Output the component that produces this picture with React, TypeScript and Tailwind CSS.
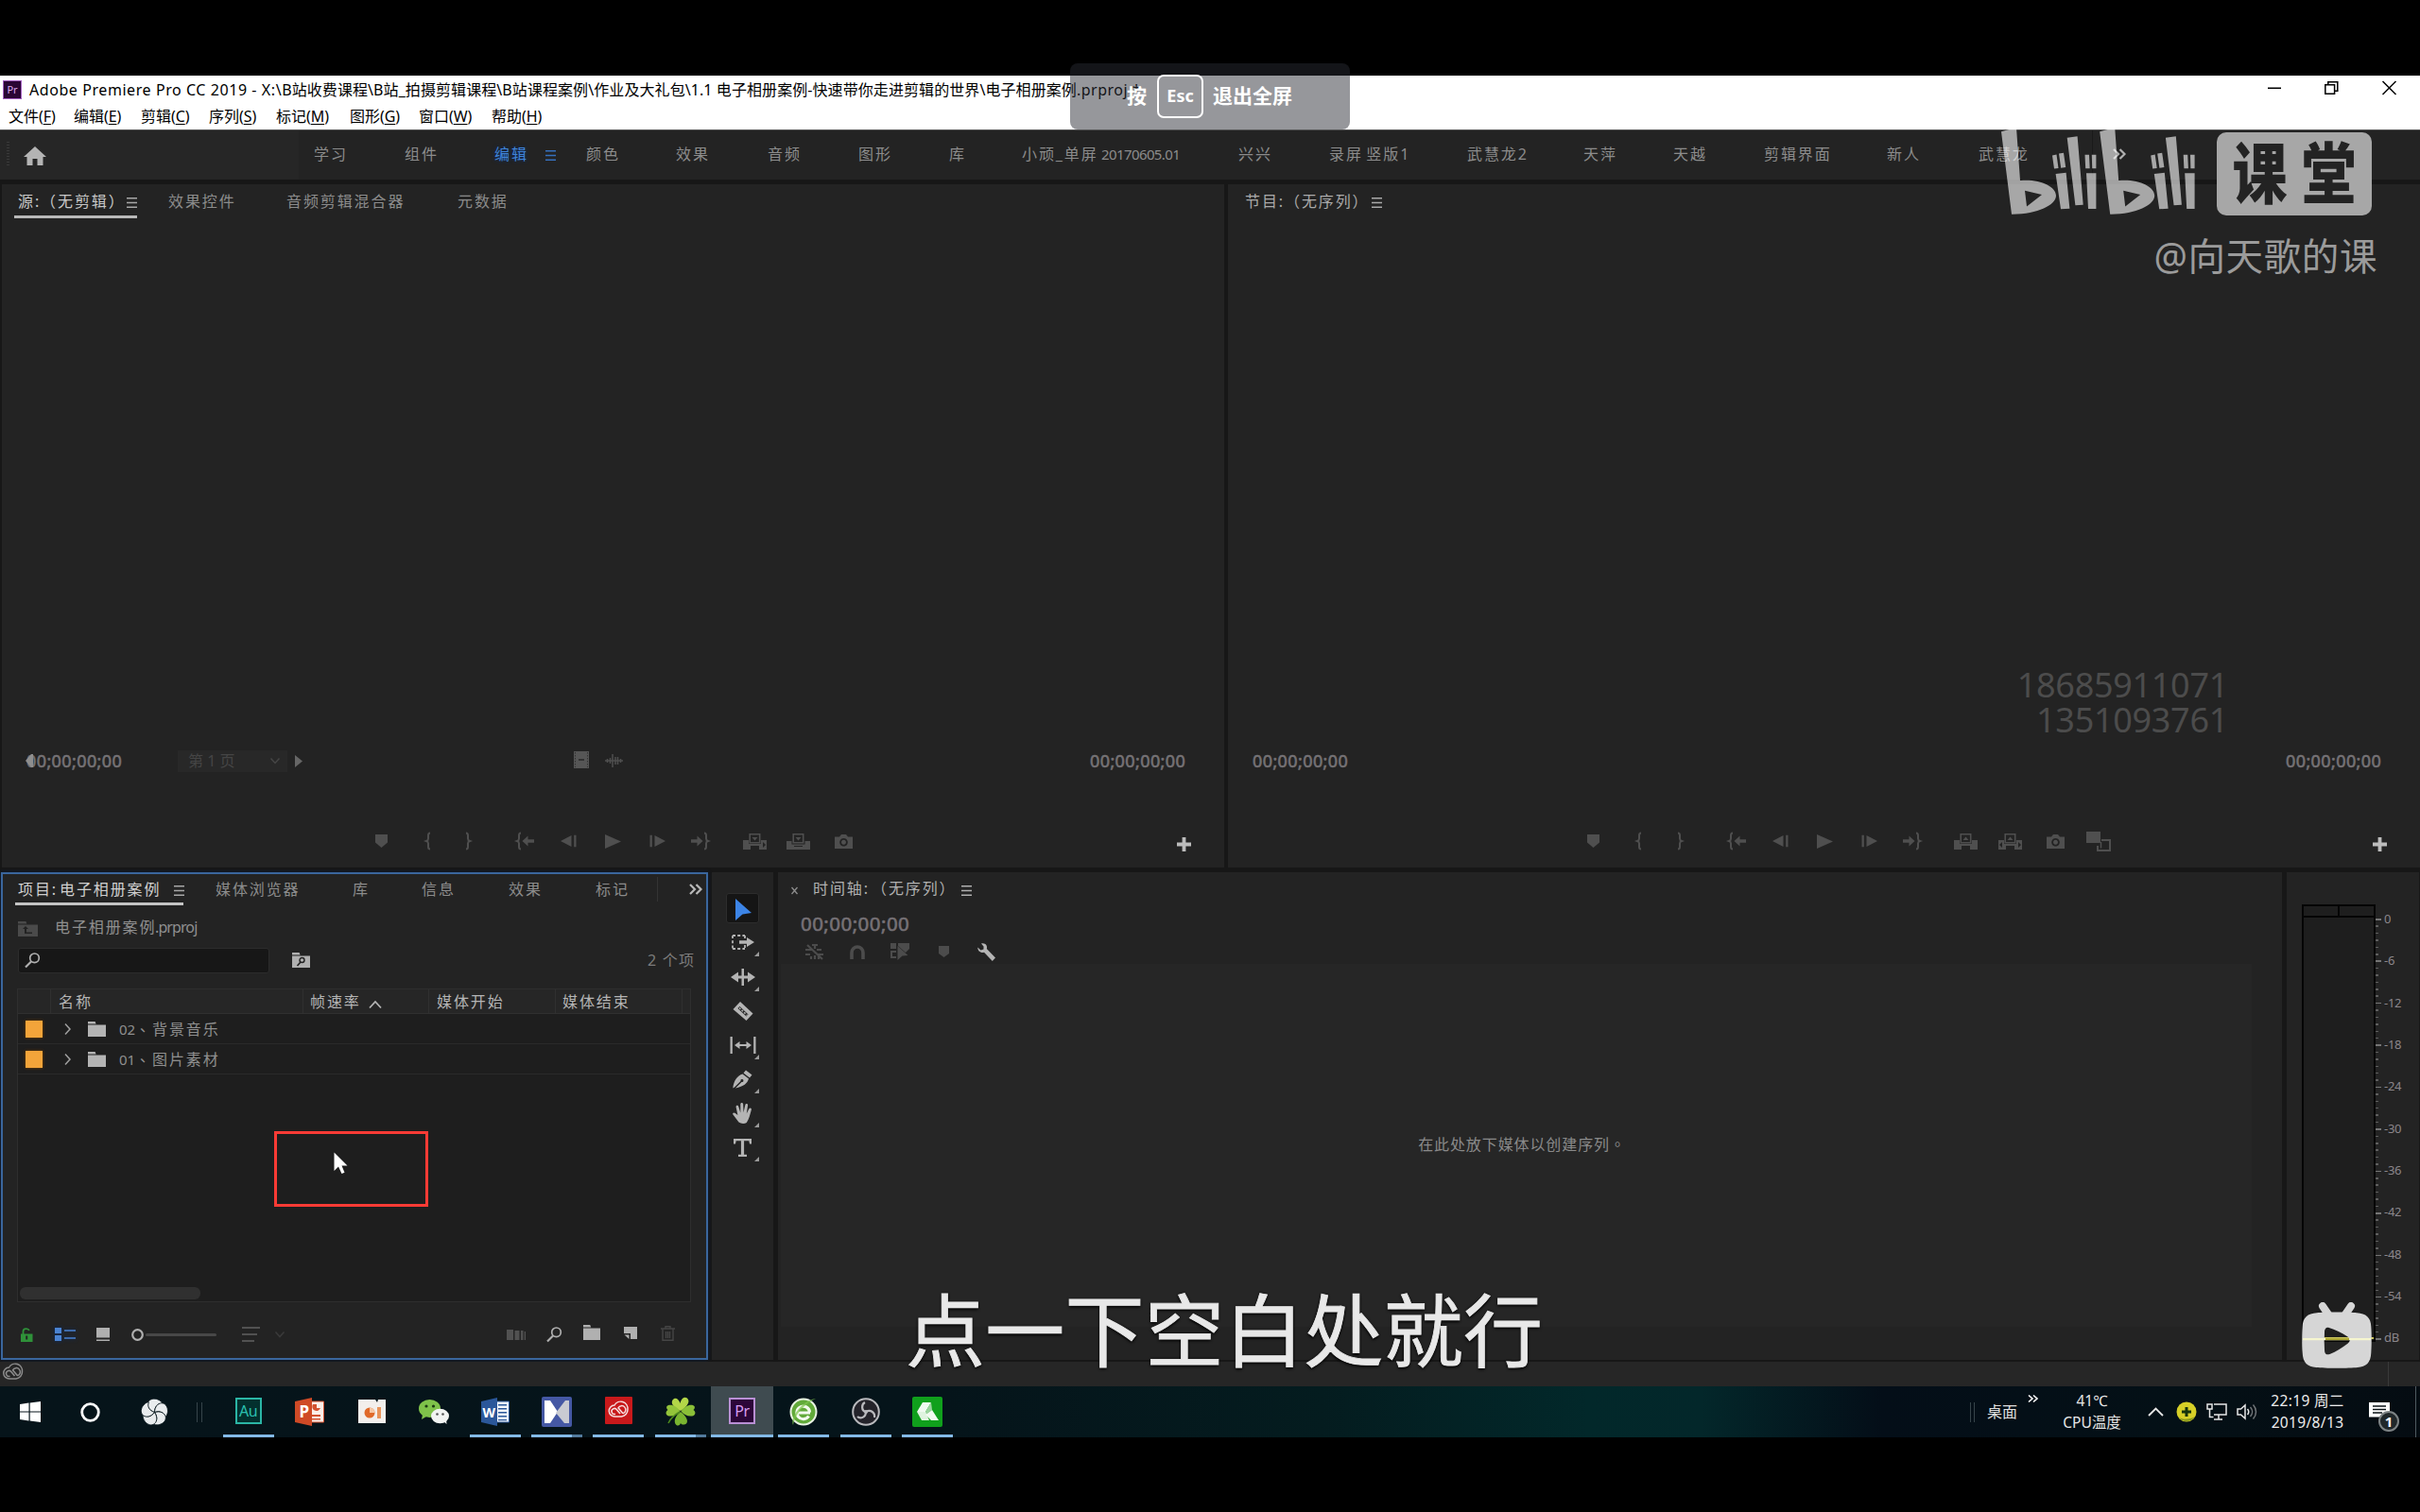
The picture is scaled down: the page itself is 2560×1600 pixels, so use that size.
import React from "react";

const ui = "font-['Noto_Sans','Noto_Sans_CJK_SC',sans-serif]";

type Item = { at: number; node: React.ReactNode };

/* A horizontal bar whose cells run from one start offset to the next. */
function Strip({ items, className = "" }: { items: Item[]; className?: string }) {
  return (
    <div className={`flex items-center whitespace-nowrap ${className}`}>
      <div className="shrink-0" style={{ width: items[0].at }} />
      {items.map((it, i) => (
        <div
          key={i}
          className="flex shrink-0 items-center"
          style={{ width: i < items.length - 1 ? items[i + 1].at - it.at : undefined }}
        >
          {it.node}
        </div>
      ))}
    </div>
  );
}

function Svg({ w, h, children, className = "" }: { w: number; h: number; children: React.ReactNode; className?: string }) {
  return (
    <svg width={w} height={h} viewBox={`0 0 ${w} ${h}`} fill="currentColor" className={`block shrink-0 overflow-visible ${className}`}>
      {children}
    </svg>
  );
}

const Zh = ({ children, className = "" }: { children: React.ReactNode; className?: string }) => (
  <span className={`text-[16px] leading-[20px] tracking-[1.9px] ${className}`}>{children}</span>
);

const MenuLines = ({ className = "" }: { className?: string }) => (
  <Svg w={11} h={11} className={className}>
    <path d="M0 0h11v1.5H0zM0 4.7h11v1.5H0zM0 9.4h11v1.5H0z" />
  </Svg>
);

const Chevrons = ({ className = "" }: { className?: string }) => (
  <Svg w={14} h={12} className={className}>
    <path d="M1 1l5 5-5 5M7.500 1l5 5-5 5" fill="none" stroke="currentColor" strokeWidth="2.2" />
  </Svg>
);

const Timecode = ({ className = "" }: { className?: string }) => (
  <span className={`text-[18px] leading-[20px] tracking-[0.4px] text-[#757275] [-webkit-text-stroke:0.6px_currentColor] ${className}`}>00;00;00;00</span>
);

/* ---------- transport icons ---------- */
const Marker = () => <Svg w={13} h={14}><path d="M0 0h13v8.500L6.500 14 0 8.500z" /></Svg>;
const brace = "M5 .5C3 .5 3 1.500 3 3v3.500C3 8 2.500 8.500 1 9c1.500.5 2 1 2 2.500V15c0 1.500 0 2.500 2 2.500";
const BraceL = () => <Svg w={6} h={18}><path d={brace} fill="none" stroke="currentColor" strokeWidth="2" /></Svg>;
const BraceR = () => <Svg w={6} h={18} className="-scale-x-100"><path d={brace} fill="none" stroke="currentColor" strokeWidth="2" /></Svg>;
const GoIn = ({ flip = false }: { flip?: boolean }) => (
  <Svg w={19} h={18} className={flip ? "-scale-x-100" : ""}>
    <path d={brace} fill="none" stroke="currentColor" strokeWidth="2" />
    <path d="M6.500 9l6-5.500v3.700H19v3.600h-6.500v3.700z" />
  </Svg>
);
const StepBack = ({ flip = false }: { flip?: boolean }) => (
  <Svg w={17} h={12} className={flip ? "-scale-x-100" : ""}>
    <path d="M0 6L11.500 0v12zM14.200 -.3h2.300v12.600h-2.300z" />
  </Svg>
);
const Play = () => <Svg w={17} h={15}><path d="M0 0l17 7.500L0 15z" /></Svg>;
const Insert = ({ kind }: { kind: "insert" | "over" | "lift" | "extract" }) => (
  <Svg w={25} h={17}>
    {kind === "over" ? (
      <path d="M0 8h5.500v3.500h14V8H25v9H0z" />
    ) : (
      <path d="M0 7h6v4h13V7h6v10h-8v-4H8v4H0z" />
    )}
    <path d="M7.200 .8h10.500v9H7.200z" fill="none" stroke="currentColor" strokeWidth="1.6" />
    <path d={kind === "lift" || kind === "extract" ? "M9.500 7l3-3.500L15.500 7z" : "M9.500 4l3 3.500L15.500 4z"} />
    {kind !== "over" && kind !== "lift" && <path d="M21 9l3 3-3 3z" fill="#232323" />}
    {kind === "extract" && <path d="M4 9l-3 3 3 3z" fill="#232323" />}
    {kind === "over" && <path d="M8 13h9v1H8z" fill="#232323" />}
  </Svg>
);
const Camera = () => (
  <Svg w={19} h={15}>
    <path fillRule="evenodd" d="M0 2.500h5L7 0h5l2 2.500h5V15H0zM9.500 4a4.300 4.300 0 1 0 .01 0zM9.500 5.800a2.500 2.500 0 1 1-.01 0z" />
  </Svg>
);
const Compare = () => (
  <Svg w={26} h={21}>
    <path d="M0 0h15v12H0z" />
    <path d="M16 9h9v11H12v-5" fill="none" stroke="currentColor" strokeWidth="2" />
    <path d="M15.500 11v6.500" fill="none" stroke="currentColor" strokeWidth="1.500" />
  </Svg>
);
const Plus = () => <Svg w={15} h={15} className="text-[#bcbcbc]"><path d="M5.600 0h3.800v5.600H15v3.800H9.400V15H5.600V9.400H0V5.600h5.600z" /></Svg>;

/* ---------- shared small icons ---------- */
const Folder = ({ w = 19 }: { w?: number }) => <Svg w={w} h={16}><path d={`M0 0h${w * 0.4}l1 2.500H0zM0 3.500h${w}V16H0z`} /></Svg>;
const Magnify = () => (
  <Svg w={17} h={16}>
    <circle cx="10.500" cy="5.800" r="4.800" fill="none" stroke="currentColor" strokeWidth="1.700" />
    <path d="M7 9.500L1 15.500" stroke="currentColor" strokeWidth="2.200" />
  </Svg>
);

function TitleBar() {
  const menus: [number, string, string][] = [
    [9, "文件", "F"], [78, "编辑", "E"], [149, "剪辑", "C"], [221, "序列", "S"],
    [292, "标记", "M"], [370, "图形", "G"], [443, "窗口", "W"], [520, "帮助", "H"],
  ];
  return (
    <header className={`flex h-[58px] shrink-0 flex-col border-b border-[#555] bg-white text-black ${ui}`}>
      <div className="flex h-[31px] items-center">
        <div className="mt-[-2px] ml-[3px] flex h-[20px] w-[20px] items-center justify-center border border-[#a35fc0] bg-[#2a0634] text-[11px] leading-none text-[#d9a6ee]">Pr</div>
        <div className="-mt-[2px] ml-[8px] flex w-[2368px] text-[16px] leading-[20px] whitespace-pre">
          <span className="tracking-[0.57px]">Adobe Premiere Pro CC 2019 - X:\</span>
          <span className="tracking-[0.08px]">B站收费课程\B站_拍摄剪辑课程\B站课程案例\作业及大礼包\1.1 电子相册案例-快速带你走进剪辑的世界\电子相册案例</span>
          <span className="tracking-[0.500px]">.prproj *</span>
        </div>
        <Strip
          className="-mt-[6px]"
          items={[
            { at: 0, node: <Svg w={14} h={14}><path d="M0 6.500h14v1.600H0z" /></Svg> },
            { at: 60, node: <Svg w={15} h={14}><path d="M.8 3.800h9.800v9.500H.8zM3.800 3.500V.8h10v9.500h-3" fill="none" stroke="#000" strokeWidth="1.500" /></Svg> },
            { at: 121, node: <Svg w={15} h={14}><path d="M.5 0l14 14M14.500 0l-14 14" stroke="#000" strokeWidth="1.500" /></Svg> },
          ]}
        />
      </div>
      <Strip
        className="-mt-[1px] h-[26px] text-[16px] leading-[20px]"
        items={menus.map(([at, t, k]) => ({
          at,
          node: <span className="tracking-[-0.05px]">{t}(<span className="underline underline-offset-2">{k}</span>)</span>,
        }))}
      />
    </header>
  );
}

function WorkspaceBar() {
  const tabs: Item[] = [
    { at: 7, node: <div className="h-[26px] w-[3px] bg-[repeating-linear-gradient(#3a3a3a_0_1px,transparent_1px_3px)]" /> },
    { at: 25, node: <Svg w={24} h={20} className="mt-[4px] text-[#b4b4b4]"><path d="M12 0l12 11h-3.500v9h-6v-7h-5v7h-6v-9H0z" /></Svg> },
    { at: 332, node: <Zh>学习</Zh> },
    { at: 428, node: <Zh>组件</Zh> },
    { at: 523, node: <Zh className="text-[#3f83d8] [text-shadow:0_0_4px_#0a2c66]">编辑</Zh> },
    { at: 577, node: <MenuLines className="mt-[2px] text-[#3670bd]" /> },
    { at: 620, node: <Zh>颜色</Zh> },
    { at: 715, node: <Zh>效果</Zh> },
    { at: 812, node: <Zh>音频</Zh> },
    { at: 908, node: <Zh>图形</Zh> },
    { at: 1004, node: <Zh>库</Zh> },
    { at: 1081, node: <Zh>小顽_单屏</Zh> },
    { at: 1165, node: <span className="text-[15px] tracking-[-0.6px]">20170605.01</span> },
    { at: 1310, node: <Zh>兴兴</Zh> },
    { at: 1406, node: <Zh className="[word-spacing:-2.500px]">录屏 竖版1</Zh> },
    { at: 1552, node: <Zh>武慧龙2</Zh> },
    { at: 1675, node: <Zh>天萍</Zh> },
    { at: 1770, node: <Zh>天越</Zh> },
    { at: 1866, node: <Zh>剪辑界面</Zh> },
    { at: 1996, node: <Zh>新人</Zh> },
    { at: 2093, node: <Zh>武慧龙</Zh> },
    { at: 2213, node: <div className="h-[50px] w-px bg-[#191919]" /> },
    { at: 2235, node: <Chevrons className="text-[#b0b0b0]" /> },
  ];
  return <Strip className="h-[52px] shrink-0 bg-[linear-gradient(90deg,#262626_316px,#232323_316px)] pb-[2px] text-[#8c8c8c]" items={tabs} />;
}

function Transport({ items }: { items: Item[] }) {
  return <Strip className="h-[24px] text-[#4f4f4f]" items={items} />;
}

function SourcePanel() {
  return (
    <section className="ml-[2px] flex h-[723px] w-[1293px] flex-col bg-[#232323]">
      <div className="flex h-[36px] flex-col">
        <Strip
          className="mt-[7px] h-[22px] text-[#8c8c8c]"
          items={[
            { at: 17, node: <Zh className="text-[#c8c8c8]">源:（无剪辑）</Zh> },
            { at: 132, node: <MenuLines className="mt-[3px] text-[#a8a8a8]" /> },
            { at: 176, node: <Zh>效果控件</Zh> },
            { at: 301, node: <Zh>音频剪辑混合器</Zh> },
            { at: 482, node: <Zh>元数据</Zh> },
          ]}
        />
        <div className="mt-[4px] ml-[13px] h-[3px] w-[130px] shrink-0 bg-[#b8b8b8]" />
      </div>
      <div className="flex-1" />
      <Strip
        className="h-[24px] text-[#4f4f4f]"
        items={[
          { at: 26, node: <><Timecode className="text-[#7d7b7d]" /><Svg w={9} h={14} className="-ml-[102px]"><path d="M6 0h2v14H6L0 7z" className="text-[#8e8e8e]" fill="currentColor" /></Svg></> },
          {
            at: 186,
            node: (
              <div className="flex h-[23px] w-[116px] items-center justify-between bg-[#282828] pr-[8px] pl-[11px] text-[#454545]">
                <span className="text-[16px] leading-[20px]">第 1 页</span>
                <Svg w={10} h={6}><path d="M.5.5L5 5.500 9.500.5" fill="none" stroke="currentColor" strokeWidth="1.500" /></Svg>
              </div>
            ),
          },
          { at: 310, node: <Svg w={8} h={13} className="text-[#666]"><path d="M0 0l8 6.500L0 13z" /></Svg> },
          { at: 605, node: <Svg w={16} h={18} className="-mt-[3px] text-[#565656]"><path d="M0 0h16v18H0z" /><path d="M5 8.300h6v1.400H5z" fill="#232323" /><path d="M1.500 1v16M14.500 1v16" stroke="#333" strokeWidth="1" strokeDasharray="1.5 1.5" /></Svg> },
          { at: 638, node: <Svg w={19} h={14} className="-mt-[1px]"><path d="M0 7h19M2.500 5v4M5.500 4v6M8 0v14M11 3v8M13.500 3v8M16.500 5v4" fill="none" stroke="currentColor" strokeWidth="1.500" /></Svg> },
          { at: 1151, node: <Timecode /> },
        ]}
      />
      <div className="h-[61px]" />
      <Transport
        items={[
          { at: 395, node: <Marker /> }, { at: 448, node: <BraceL /> }, { at: 490, node: <BraceR /> },
          { at: 544, node: <GoIn /> }, { at: 591, node: <StepBack /> }, { at: 638, node: <Play /> },
          { at: 685, node: <StepBack flip /> }, { at: 729, node: <GoIn flip /> },
          { at: 784, node: <Insert kind="insert" /> }, { at: 830, node: <Insert kind="over" /> },
          { at: 881, node: <Camera /> }, { at: 1243, node: <div className="mt-[6px]"><Plus /></div> },
        ]}
      />
      <div className="h-[16px]" />
    </section>
  );
}

function ProgramPanel() {
  return (
    <section className="flex h-[723px] w-[1261px] flex-col bg-[#232323]">
      <Strip
        className="mt-[7px] h-[22px] text-[#aaa]"
        items={[
          { at: 18, node: <Zh>节目:（无序列）</Zh> },
          { at: 152, node: <MenuLines className="mt-[3px]" /> },
        ]}
      />
      <div className="flex-1" />
      <Strip className="h-[24px]" items={[{ at: 26, node: <Timecode /> }, { at: 1119, node: <Timecode /> }]} />
      <div className="h-[61px]" />
      <Transport
        items={[
          { at: 380, node: <Marker /> }, { at: 432, node: <BraceL /> }, { at: 475, node: <BraceR /> },
          { at: 529, node: <GoIn /> }, { at: 576, node: <StepBack /> }, { at: 623, node: <Play /> },
          { at: 670, node: <StepBack flip /> }, { at: 714, node: <GoIn flip /> },
          { at: 768, node: <Insert kind="lift" /> }, { at: 815, node: <Insert kind="extract" /> },
          { at: 866, node: <Camera /> }, { at: 908, node: <Compare /> },
          { at: 1211, node: <div className="mt-[6px]"><Plus /></div> },
        ]}
      />
      <div className="h-[16px]" />
    </section>
  );
}

function BinRow({ no, name }: { no: string; name: string }) {
  return (
    <Strip
      className="h-[32px] border-b border-[#2a2a2a] text-[#8f8f8f]"
      items={[
        { at: 8, node: <div className="h-[18px] w-[18px] bg-[#f3a43a] shadow-[0_0_3px_#7a4300]" /> },
        { at: 49, node: <Svg w={7} h={12} className="text-[#a0a0a0]"><path d="M1 .5L6 6l-5 5.500" fill="none" stroke="currentColor" strokeWidth="1.500" /></Svg> },
        { at: 74, node: <div className="text-[#b4b4b4]"><Folder /></div> },
        { at: 107, node: <span className="text-[15px] leading-[20px]">{no}</span> },
        { at: 124, node: <span className="font-['Noto_Sans_CJK_TC',sans-serif] text-[16px] leading-[20px]" lang="zh-TW">、</span> },
        { at: 142, node: <Zh>{name}</Zh> },
      ]}
    />
  );
}

function ProjectPanel() {
  const line = <div className="h-[25px] w-px bg-[#303030]" />;
  return (
    <section className="ml-[1px] flex h-[516px] w-[748px] flex-col border-2 border-[#3a669d] bg-[#232323] shadow-[0_0_4px_#0b1d3c]">
      <Strip
        className="mt-[5px] h-[22px] shrink-0 text-[#8c8c8c]"
        items={[
          { at: 16, node: <Zh className="text-[#cfcfcf]">项目:</Zh> },
          { at: 60, node: <Zh className="text-[#cfcfcf]">电子相册案例</Zh> },
          { at: 181, node: <MenuLines className="mt-[3px] text-[#a8a8a8]" /> },
          { at: 225, node: <Zh>媒体浏览器</Zh> },
          { at: 370, node: <Zh>库</Zh> },
          { at: 443, node: <Zh>信息</Zh> },
          { at: 535, node: <Zh>效果</Zh> },
          { at: 627, node: <Zh>标记</Zh> },
          { at: 692, node: <div className="h-[26px] w-px bg-[#343434]" /> },
          { at: 726, node: <Chevrons className="text-[#b8b8b8]" /> },
        ]}
      />
      <div className="mt-[3px] ml-[13px] h-[3px] w-[178px] shrink-0 bg-[#c4c4c4]" />
      <Strip
        className="mt-[12px] h-[22px] shrink-0 text-[#8f8f8f]"
        items={[
          { at: 16, node: <div className="relative mt-[3px] text-[#4a4a4a]"><Folder w={21} /><svg className="absolute top-[4px] left-[4px]" width="12" height="10" viewBox="0 0 12 10"><path d="M4 1L1 4h2v5h8V7.500H5V4h2z" fill="#222" /></svg></div> },
          { at: 55, node: <Zh>电子相册案例</Zh> },
          { at: 161, node: <span className="text-[16px] leading-[20px] tracking-[-0.900px]">.prproj</span> },
        ]}
      />
      <Strip
        className="mt-[10px] h-[28px] shrink-0 text-[#8c8c8c]"
        items={[
          { at: 16, node: <div className="flex h-[27px] w-[266px] items-center rounded-[3px] border border-[#2c2c2c] bg-[#171717] pl-[6px] text-[#b0b0b0]"><Magnify /></div> },
          { at: 306, node: <div className="relative text-[#b0b0b0]"><Folder /><svg className="absolute top-[4px] left-[4px]" width="11" height="11" viewBox="0 0 11 11"><circle cx="6.500" cy="4" r="2.500" fill="none" stroke="#222" strokeWidth="1.400" /><path d="M5 6L1.500 10" stroke="#222" strokeWidth="1.600" /></svg></div> },
          { at: 682, node: <span className="text-[16px] leading-[20px] tracking-[1.200px] text-[#7b7b7b]">2 个项</span> },
        ]}
      />
      <div className="mt-[16px] ml-[15px] flex h-[332px] w-[713px] shrink-0 flex-col border border-[#2e2e2e] bg-[#1e1e1e]">
        <Strip
          className="h-[26px] shrink-0 border-b border-[#303030] bg-[#262626] text-[#b5b5b5]"
          items={[
            { at: 34, node: line },
            { at: 43, node: <Zh>名称</Zh> },
            { at: 301, node: line },
            { at: 309, node: <Zh>帧速率</Zh> },
            { at: 371, node: <Svg w={14} h={8} className="mt-[6px]"><path d="M1 7.500L7 1l6 6.500" fill="none" stroke="currentColor" strokeWidth="1.800" /></Svg> },
            { at: 434, node: line },
            { at: 443, node: <Zh>媒体开始</Zh> },
            { at: 568, node: line },
            { at: 576, node: <Zh>媒体结束</Zh> },
            { at: 702, node: line },
          ]}
        />
        <BinRow no="02" name="背景音乐" />
        <BinRow no="01" name="图片素材" />
        <div className="flex-1" />
        <div className="mb-[2px] ml-[2px] h-[13px] w-[191px] rounded-[6px] bg-[#303030]" />
      </div>
      <Strip
        className="mt-[22px] h-[24px] shrink-0 text-[#b0b0b0]"
        items={[
          { at: 19, node: <Svg w={13} h={15} className="text-[#2f9139]"><path fillRule="evenodd" d="M0 6.500h12.500V15H0zM5.200 8.500v4h2v-4z" /><path d="M2.500 7V3.800C2.500.5 8 .2 8.800 3" fill="none" stroke="currentColor" strokeWidth="1.800" /></Svg> },
          { at: 55, node: <Svg w={22} h={14} className="text-[#4a83d2] drop-shadow-[0_0_2px_#0a2c66]"><path d="M0 0h7v6H0zM0 8h7v6H0zM10 2.300h12v1.400H10zM10 10.300h12v1.400H10z" /></Svg> },
          { at: 99, node: <Svg w={14} h={14}><path d="M0 0h14v10.500H0zM0 12.500h14V14H0z" /></Svg> },
          { at: 136, node: <Svg w={13} h={13}><circle cx="6.500" cy="6.500" r="5.300" fill="none" stroke="currentColor" strokeWidth="2.200" /></Svg> },
          { at: 151, node: <div className="h-[3px] w-[75px] rounded bg-[#484848]" /> },
          { at: 253, node: <Svg w={19} h={16} className="text-[#515151]"><path d="M0 0h19v2H0zM0 7h16v2H0zM0 14h13v2H0z" /></Svg> },
          { at: 288, node: <Svg w={10} h={6} className="-mt-[1px] text-[#3a3a3a]"><path d="M.5.5L5 5.500 9.500.5" fill="none" stroke="currentColor" strokeWidth="1.600" /></Svg> },
          { at: 533, node: <Svg w={20} h={11} className="text-[#515151]"><path d="M0 0h7v11H0zM8.500 1h5v10h-5zM15 1h2.500v10H15zM18.700 2H20v9h-1.300z" /></Svg> },
          { at: 575, node: <Magnify /> },
          { at: 614, node: <div className="-mt-[4px]"><Folder w={18} /></div> },
          { at: 657, node: <Svg w={14} h={13} className="-mt-[4px]"><path d="M0 0h14v13H7V7H0z" /><path d="M.5 8.500H5.500V13z" /></Svg> },
          { at: 696, node: <Svg w={15} h={16} className="-mt-[3px] text-[#454545]"><path d="M0 3h15M5 3V.8h5V3M2 3.500V15.200h11V3.500M5.500 6v7M7.500 6v7M9.500 6v7" fill="none" stroke="currentColor" strokeWidth="1.400" /></Svg> },
        ]}
      />
    </section>
  );
}

function ToolPanel() {
  const tools: { icon: React.ReactNode; more: boolean; h: string }[] = [
    { more: true, h: "h-[36px]", icon: <Svg w={24} h={16}><path d="M1 1h13M1 15h13M1 1v14M14 1v4M14 11v4" fill="none" stroke="currentColor" strokeWidth="1.800" strokeDasharray="3 2.200" /><path d="M8 6.300h8V3l8 5-8 5V9.700H8z" /></Svg> },
    { more: true, h: "h-[37px]", icon: <Svg w={26} h={18}><path d="M0 9l8-5.500v4h3.500V0h2.500v7.500H18v-4L26 9l-8 5.500v-4h-4V18h-2.500v-7.500H8v4z" /></Svg> },
    { more: false, h: "h-[36px]", icon: <Svg w={22} h={20}><path d="M8 0l13.500 12.500L14.500 20 .5 8z" /><path d="M6.500 6l9 8.500" stroke="#232323" strokeWidth="3" /><path d="M7 6.500l8.500 8" stroke="currentColor" strokeWidth="1.500" strokeDasharray="2 1.500" /></Svg> },
    { more: true, h: "h-[36px]", icon: <Svg w={28} h={18}><path d="M.5 0h2.300v18H.5zM25.200 0h2.300v18h-2.300zM5 9l5.500-4v3h7V5L23 9l-5.500 4v-3h-7v3z" /></Svg> },
    { more: true, h: "h-[36px]", icon: <Svg w={21} h={20}><path fillRule="evenodd" d="M14 .5l6.500 5L18 8.500 11.500 3.500zM10.500 4.500l6.500 5c-1.500 5-5 8-14 10L9.500 13a1.500 1.500 0 1 0-1-1L2 18.500l-1.700 1C1 12 5 6 10.500 4.500z" /></Svg> },
    { more: true, h: "h-[36px]", icon: <Svg w={21} h={22}><path d="M6.500 20.500L.3 12.300c-.8-1.600 1.200-2.500 2.500-1.300l2.600 2L3.600 4.500c-.3-2 2.200-2.300 2.700-.4l2 6.400V1.600c0-2 2.700-2 2.900 0l.3 8.600L13.400 2c.5-1.800 3-1.300 2.700.6l-1.300 8.600 2.600-4.900c.9-1.500 3-.6 2.400 1.100-1.400 4.600-2.200 9.300-5 13.600-2.200 1.300-6 1.200-8.300-.5z" /></Svg> },
    { more: true, h: "h-[36px]", icon: <Svg w={19} h={19}><path d="M0 0h19v5.500h-2L16.300 2.300h-5.200v14.500H14V19H5v-2.200h2.900V2.300H2.700L2 5.500H0z" /></Svg> },
  ];
  return (
    <section className="flex h-[516px] w-[65px] flex-col items-center bg-[#232323] text-[#b4b4b4]">
      <div className="mt-[22px] flex h-[32px] w-[35px] items-center justify-center rounded-[3px] border border-[#2d2d2d] bg-[#151515]">
        <Svg w={17} h={23} className="mt-[2px] ml-[2px] text-[#3c84e6]"><path d="M0 0l17 15-9.500 1.500L0 23z" /></Svg>
      </div>
      <div className="h-[2px]" />
      {tools.map((t, i) => (
        <div key={i} className={`relative flex w-[40px] shrink-0 items-center justify-center ${t.h}`}>
          {t.icon}
          {t.more && <Svg w={5} h={5} className="absolute right-[3px] bottom-[3px] text-[#9a9a9a]"><path d="M5 0v5H0z" /></Svg>}
        </div>
      ))}
    </section>
  );
}

function TimelinePanel() {
  return (
    <section className="flex h-[516px] w-[1591px] flex-col bg-[#232323]">
      <Strip
        className="mt-[6px] h-[22px] shrink-0 text-[#b0b0b0]"
        items={[
          { at: 14, node: <Svg w={7} h={7} className="mt-[4px] text-[#8c8c8c]"><path d="M.5 0l6 7M6.500 0l-6 7" stroke="currentColor" strokeWidth="1.300" /></Svg> },
          { at: 37, node: <Zh>时间轴:</Zh> },
          { at: 99, node: <Zh>（无序列）</Zh> },
          { at: 194, node: <MenuLines className="mt-[4px]" /> },
        ]}
      />
      <div className="mt-[12px] ml-[24px] h-[28px] text-[20.500px] leading-[28px] tracking-[0.45px] text-[#767176] [-webkit-text-stroke:0.6px_currentColor]">00;00;00;00</div>
      <Strip
        className="mt-[2px] h-[28px] shrink-0 text-[#4c4c4c]"
        items={[
          { at: 29, node: <Svg w={19} h={17}><path d="M0 6h7M0 11h5M12 6h5M13 11h6M10 0v5M7 1h6M10 12v4M6 13v3M14 13v3M2 1l16 15" fill="none" stroke="currentColor" strokeWidth="2.200" /></Svg> },
          { at: 76, node: <Svg w={16} h={15}><path d="M2 15V8a6 6 0 0 1 12 0v7" fill="none" stroke="currentColor" strokeWidth="3.600" /></Svg> },
          { at: 119, node: <Svg w={20} h={18}><path d="M0 0h6v6H0zM8 0h12v6l-4 4-8-7zM7.500 3l11 10-6 .5-5 4.500z" /><path d="M6 9H1v6h5" fill="none" stroke="currentColor" strokeWidth="2" /></Svg> },
          { at: 170, node: <Svg w={11} h={12}><path d="M0 0h11v8l-5.500 4L0 8z" /></Svg> },
          { at: 211, node: <Svg w={19} h={19} className="text-[#b4b4b4]"><path d="M4 .5C8 -.8 11 2.500 9.800 6L19 15.500 15.800 19 7 9.800C3.500 11 0 8 .3 4.500L3.500 7.500 6.500 6.500V3.500z" /></Svg> },
        ]}
      />
      <div className="-mt-[1px] ml-[3px] flex h-[384px] w-[1556px] items-center justify-center bg-[#262626] pb-[3px] text-[#8a8a8a]">
        <span className="ml-[12px] text-[16px] leading-[20px] tracking-[0.900px]">在此处放下媒体以创建序列<span className="font-['Noto_Sans_CJK_TC',sans-serif]" lang="zh-TW">。</span></span>
      </div>
    </section>
  );
}

function AudioMeter() {
  const labels = ["0", "-6", "-12", "-18", "-24", "-30", "-36", "-42", "-48", "-54", "dB"];
  return (
    <section className="flex h-[516px] w-[140px] bg-[#232323]">
      <div className="mt-[34px] ml-[16px] flex h-[463px] w-[78px] flex-col border-2 border-[#050505] bg-[#1e1e1e]">
        <div className="flex h-[12px] shrink-0 border-b-2 border-[#050505]">
          <div className="w-[38px] border-r-2 border-[#050505]" />
        </div>
        <div className="flex-1" />
        <div className="mb-[1px] h-[2px] w-full bg-[#c9c35c]" />
      </div>
      <div className="mt-[49px] flex w-[8px] flex-col">
        {Array.from({ length: 61 }, (_, i) => (
          <div key={i} className="h-[7.410px] shrink-0">
            <div className={i % 6 === 0 ? "h-[1.500px] w-[6px] bg-[#757575]" : "h-[1.500px] w-[3px] bg-[#5f5f5f]"} />
          </div>
        ))}
      </div>
      <div className="mt-[41px] ml-[1px] flex flex-col text-[13px] leading-[16px] tracking-[-0.3px] text-[#8b868b]">
        {labels.map((l) => (
          <div key={l} className="h-[44.350px] shrink-0">{l}</div>
        ))}
      </div>
    </section>
  );
}

/* ---------- taskbar ---------- */
function TaskApp({ icon, run, active = false, stacked = false }: { icon: React.ReactNode; run: boolean; active?: boolean; stacked?: boolean }) {
  return (
    <div className={`flex h-[54px] w-[65.300px] shrink-0 flex-col items-center justify-between ${active ? "bg-[#3f4b50]" : ""}`}>
      <div className="flex h-[51px] items-center pt-[2px]">{icon}</div>
      <div className={`flex h-[3px] ${active ? "w-full" : "w-[54px]"} ${run ? "bg-[#83b9e6]" : ""}`}>
        {stacked && <div className="ml-auto h-[3px] w-[11px] bg-[#527a9c]" />}
      </div>
    </div>
  );
}

const AdobeTile = ({ t, c, bg }: { t: string; c: string; bg: string }) => (
  <div className={`-mt-[2px] flex h-[28px] w-[28px] items-center justify-center border-2 text-[16px] leading-none tracking-[-0.500px] ${c} ${bg}`}>{t}</div>
);

const ccPath = (
  <g fill="none" stroke="currentColor">
    <path d="M7 17a6 6 0 0 1-.5-12A7.500 7.500 0 0 1 20.500 9.500 7.300 7.300 0 0 1 14 17z" />
    <path d="M12.500 14L9 9.800a3 3 0 1 0-1.500 4.500M15.500 13.800a4.200 4.200 0 1 0-5-6l5 6" />
  </g>
);

function Taskbar() {
  return (
    <div className={`flex h-[54px] w-[2560px] bg-[linear-gradient(90deg,#06141a_0px,#05141a_1000px,#041c1f_1400px,#02282a_1680px,#03272a_1800px,#040e18_1990px,#041016_2300px,#050c12_2560px)] text-white ${ui}`}>
      <Strip
        className="h-[54px] w-[230px]"
        items={[
          { at: 21, node: <Svg w={22} h={22}><path d="M0 3l9.500-1.400v8.900H0zM10.700 1.400L22 0v10.500H10.700zM0 11.600h9.500v8.800L0 19zM10.700 11.600H22V22l-11.300-1.600z" /></Svg> },
          { at: 85, node: <Svg w={21} h={21}><circle cx="10.500" cy="10.500" r="8.800" fill="none" stroke="#fff" strokeWidth="2.800" /></Svg> },
          {
            at: 149,
            node: (
              <Svg w={29} h={29} className="text-[#e9ecee]">
                {[0, 72, 144, 216, 288].map((a) => (
                  <path key={a} transform={`rotate(${a} 14.500 14.500)`} d="M14.500 14.500C9 12.500 6.500 8.500 7.500 4.500c1-3.500 5-5 9-4 3.500.8 6.500 3.500 6 5-4.500-.5-8 3-8 9z" stroke="#06141a" strokeWidth=".8" />
                ))}
              </Svg>
            ),
          },
          { at: 208, node: <div className="h-[21px] w-[6px] border-x border-[#36444a]" /> },
        ]}
      />
      <TaskApp run icon={<AdobeTile t="Au" c="border-[#2bb5a5] text-[#2bc0b0]" bg="bg-[#03302e]" />} />
      <TaskApp
        run={false}
        icon={<Svg w={31} h={30}><path d="M14 4h16.500v22H14z" fill="#fbeee8" stroke="#d35230" strokeWidth="1" /><path d="M19 7h4v4h4a4.500 4.500 0 1 1-8-4zM17 18h10v2H17zM17 22h10v1.500H17z" fill="#d35230" /><path d="M0 4L18 0v30L0 26z" fill="#cf4a26" /><text x="4.500" y="21" fontSize="17" fontWeight="700" fill="#fff">P</text></Svg>}
      />
      <TaskApp
        run={false}
        icon={<Svg w={29} h={25}><path d="M0 0h18l2 3 1-3h8v25H0z" fill="#f3efec" /><circle cx="12" cy="14" r="5.500" fill="#e06a2a" /><path d="M20 8h4v12h-4z" fill="#e9945a" /><path d="M12 8.500a5.500 5.500 0 0 1 5.500 5.500H12z" fill="#f6c7a4" /></Svg>}
      />
      <TaskApp
        run={false}
        icon={<Svg w={32} h={26}><ellipse cx="11.500" cy="9.500" rx="11.500" ry="9.500" fill="#7fc24a" /><path d="M4 16l-1 5 5-3z" fill="#7fc24a" /><circle cx="8" cy="7" r="1.600" fill="#1d3b12" /><circle cx="15.500" cy="7" r="1.600" fill="#1d3b12" /><ellipse cx="22.500" cy="17.500" rx="9.500" ry="7.800" fill="#f2f4f2" /><path d="M26 23l3.500 3-.5-5z" fill="#f2f4f2" /><circle cx="19.500" cy="15.500" r="1.300" fill="#555" /><circle cx="25.500" cy="15.500" r="1.300" fill="#555" /></Svg>}
      />
      <TaskApp
        run
        icon={<Svg w={30} h={30}><path d="M14 4h15.500v22H14z" fill="#f3f6fb" stroke="#2b579a" strokeWidth="1" /><path d="M18 7h9v1.600h-9zM18 11h9v1.600h-9zM18 15h9v1.600h-9zM18 19h9v1.600h-9zM18 23h9v1.200h-9z" fill="#2b579a" /><path d="M0 4L17 0v30L0 26z" fill="#2b579a" /><text x="1.500" y="20.500" fontSize="14" fontWeight="700" fill="#fff">W</text></Svg>}
      />
      <TaskApp
        run
        stacked
        icon={<Svg w={32} h={32}><rect width="32" height="32" rx="2" fill="#4558a4" /><path d="M3 4h6l8 12-8 12H3z" fill="#fff" /><path d="M29 4h-4l-10 13 9 11h5z" fill="#c9cbd2" /></Svg>}
      />
      <TaskApp
        run
        icon={<Svg w={29} h={29} className="-mt-[3px]"><rect width="29" height="29" rx="1" fill="#c8191b" /><g transform="translate(3.500 4)" className="text-[#f5dede]" strokeWidth="1.500">{ccPath}</g></Svg>}
      />
      <TaskApp
        run
        stacked
        icon={
          <Svg w={32} h={30}>
            <path d="M16 14C9 11 5 6 7.500 2.500 10-1 14 1 15.500 6 17-1 22-2 24 2c2 3.500-3 9-8 12z" fill="#b3d648" />
            <path d="M15.500 14.500C12 8 4 6 1.500 9c-1 1.500 0 3 1 4C-.5 15 0 19 4 19.500c5 .5 9-2 11.500-5z" fill="#93c43a" />
            <path d="M16.500 14.500C20 8 28 6 30.500 9c1 1.500 0 3-1 4 3 2 2.500 6-1.500 6.500-5 .5-9-2-11.500-5z" fill="#8abf38" />
            <path d="M16 15c-6 4-8 11-4.500 14 2.500 1.500 4-.5 4.500-2 1 1.500 4 2.500 6 .5 3-3-1-9-6-12.500z" fill="#79b430" />
            <path d="M15 15C10 18 5 22 3 27" stroke="#4d8a1d" strokeWidth="1.500" fill="none" />
          </Svg>
        }
      />
      <TaskApp run active icon={<AdobeTile t="Pr" c="border-[#b98fd4] text-[#d59cf0]" bg="bg-[#2c0639]" />} />
      <TaskApp
        run
        icon={<Svg w={30} h={30}><circle cx="15" cy="15" r="13.500" fill="#62aa3a" stroke="#e9f3e2" strokeWidth="2" /><path d="M8.500 16h13.500M21.500 15.500a6.800 6.800 0 1 0-1 4" fill="none" stroke="#f4faef" strokeWidth="3.200" /><path d="M4 29C0 22 14 2 28 1c-4 2-20 10-24 28z" fill="#7cc34b" opacity=".7" /></Svg>}
      />
      <TaskApp
        run
        icon={<Svg w={30} h={30}><circle cx="15" cy="15" r="13.800" fill="#24232a" stroke="#b9b9bd" strokeWidth="2" /><path d="M15 15c-5-1-5-8-1-10M15 15c5-3 10 1 9 6M15 15c0 6-6 8-9 5" fill="none" stroke="#b9b9bd" strokeWidth="2.200" /><circle cx="15" cy="15" r="2" fill="#b9b9bd" /></Svg>}
      />
      <TaskApp
        run
        icon={<Svg w={32} h={32}><rect width="32" height="32" rx="2" fill="#10a01c" /><path d="M11 6h9l-6 10H5z" fill="#f1faf1" /><path d="M20 6l1 8-7 5v-3z" fill="#9ad49e" /><path d="M5 16h9l4 9H10z" fill="#dff3e0" /><path d="M14 19l7-5 7 11h-8z" fill="#f1faf1" /></Svg>}
      />
      <div className="flex-1" />
      <div className="flex h-[54px] w-[482px] shrink-0 items-center">
        <Strip
          className="h-[54px] w-[482px] text-[16px] leading-[22px]"
          items={[
            { at: 6, node: <div className="h-[21px] w-[5px] border-x border-[#36444a]" /> },
            { at: 24, node: <span className="text-[#e0e0e0]">桌面</span> },
            { at: 67, node: <Svg w={11} h={8} className="-mt-[28px]"><path d="M1 .5l4 3.500-4 3.500M6 .5l4 3.500-4 3.500" fill="none" stroke="#fff" strokeWidth="1.600" /></Svg> },
            { at: 103, node: <div className="-ml-[2px] w-[68px] text-center text-[15.500px] leading-[23px] text-[#e6e6e6]"><div>41℃</div><div>CPU温度</div></div> },
            { at: 194, node: <Svg w={17} h={10}><path d="M1 9L8.500 1.500 16 9" fill="none" stroke="#e6e6e6" strokeWidth="1.900" /></Svg> },
            { at: 224, node: <Svg w={22} h={22}><circle cx="11" cy="11" r="10.500" fill="#d6cf27" /><path d="M3 17a10.500 10.500 0 0 0 17-1c-5 3-12 4-17 1z" fill="#86981c" /><path d="M9.500 6h3v3.500H16v3h-3.500V16h-3v-3.500H6v-3h3.500z" fill="#15330c" /></Svg> },
            { at: 256, node: <Svg w={22} h={18}><path d="M8 1h13v11H8M13 12v4.500M8 17h9M1 1h5v5H1zM3.500 6v8.500h4" fill="none" stroke="#e6e6e6" strokeWidth="1.500" /></Svg> },
            { at: 288, node: <Svg w={23} h={18}><path d="M1 6h3.500L9 2v14l-4.500-4H1z" fill="none" stroke="#e6e6e6" strokeWidth="1.500" /><path d="M11.500 6c1.500 1.800 1.500 4.200 0 6" fill="none" stroke="#e6e6e6" strokeWidth="1.500" /><path d="M14.500 4c2.700 3 2.700 7 0 10M17.500 1.500c4 4.500 4 10.500 0 15" fill="none" stroke="#75797c" strokeWidth="1.400" /></Svg> },
            { at: 322, node: <div className="-ml-[1px] w-[84px] text-center text-[15.500px] leading-[23px] tracking-[0.350px] text-[#ececec]"><div>22:19 周二</div><div>2019/8/13</div></div> },
            {
              at: 428,
              node: (
                <div className="relative">
                  <Svg w={22} h={20}><path d="M0 0h22v15.500h-6V20l-5-4.500H0z" /><path d="M4 4h14M4 7.500h14M4 11h10" stroke="#0a1216" strokeWidth="1.500" /></Svg>
                  <div className="absolute top-[9px] left-[10px] flex h-[22px] w-[22px] items-center justify-center rounded-full border-2 border-[#7d8385] bg-[#20272a] text-[15px] leading-none font-bold">1</div>
                </div>
              ),
            },
            { at: 477, node: <div className="h-[54px] w-px bg-[#4e5a60]" /> },
          ]}
        />
      </div>
    </div>
  );
}

/* ---------- floating layers ---------- */
function BiliLogo() {
  const group = (
    <>
      <path fillRule="evenodd" d="M0 4.300L16 0l4 56c20-2 38 6 38 16 0 10-20 20-47 19.700zM25 66.700L27 83.500 43 71z" />
      <path d="M57.600 49l11-1.300 3.800 38-9.400.6zM54 29.500l4.500-1 2 14.500-4.500.5zM61 27.500l5-.8 2.200 15.300-5 .8zM69.700 10.700l10.900-1.400 6.100 72.400-8.300.6zM90 48.300h10.400V86H92zM88.500 28.700h4.500l.7 14.600h-4.500zM95.800 28.700h4.600v14.600h-4.200z" />
    </>
  );
  return (
    <svg width="206" height="92" viewBox="0 0 206 92" fill="#fff" fillOpacity="0.6" className="block">
      {group}
      <g transform="translate(104.2 0)">{group}</g>
    </svg>
  );
}

function Overlays() {
  return (
    <>
      <div className="absolute top-[67px] left-[1132px] flex h-[70px] w-[296px] items-center rounded-[8px] bg-[rgba(41,43,50,0.49)] pl-[60px] text-[21px] leading-none font-bold text-white">
        <span className="-mt-[2px]">按</span>
        <span className="ml-[11px] flex h-[46px] w-[49px] items-center justify-center rounded-[7px] border-2 border-white pb-[2px] text-[18px]">Esc</span>
        <span className="-mt-[2px] ml-[10px]">退出全屏</span>
      </div>

      <div className="absolute top-[135px] left-[2117px] flex">
        <BiliLogo />
        <div className="mt-[5px] ml-[22px] flex h-[88px] w-[164px] items-center justify-center rounded-[10px] bg-[#a7a7a7] text-[#232323]">
          <span className="-mr-[15px] -translate-y-[1px] scale-y-[1.220] text-[58px] leading-none font-black tracking-[15px]">课堂</span>
        </div>
      </div>
      <div className="absolute top-[245px] right-[45px] text-[39.500px] leading-[52px] tracking-[0.600px] whitespace-nowrap text-[#9b9b9b]">@向天歌的课</div>

      <div className="absolute top-[706px] right-[203px] text-right text-[36px] leading-[37px] tracking-[-0.300px] text-[#4c4c4c]">
        <div>18685911071</div>
        <div>1351093761</div>
      </div>

      <div className="absolute top-[1197px] left-[290px] h-[80px] w-[163px] border-[3px] border-[#fb3b35]" />
      <svg className="absolute top-[1219px] left-[353px]" width="15" height="24" viewBox="0 0 15 24">
        <path d="M.5 .5V20l4.500-4.500L8.500 23l3-1.200L8.500 14.500h6z" fill="#fff" />
      </svg>

      <svg className="absolute top-[1378px] left-[2435px]" width="74" height="71" viewBox="0 0 74 69" preserveAspectRatio="none">
        <path d="M22 4l7 10M52 4l-7 10" stroke="#d6d6d6" strokeWidth="8" strokeLinecap="round" />
        <path fillRule="evenodd" d="M16 11C24 10 50 10 58 11c10 .5 15 5 15.300 14 .6 7 .6 20 0 27C73 62 68 66.500 59 67c-9 1-35 1-44 0C6 66.500 1 62 .7 52c-.6-7-.6-20 0-27C1 16 6 11.500 16 11zM28 26c-3 0-4 2-4 5-.4 6-.4 12 0 18 0 4 2 5.500 5.500 4.500 7-3 13-6.500 19-11 3-2.500 3-4.500 0-7C42 31.500 36 28.500 28 26z" fill="#d6d6d6" />
        <path d="M1 38h72" stroke="#f6f6cf" strokeWidth="2" />
        <path d="M25 38h25" stroke="#a9a32f" strokeWidth="2" />
      </svg>

      <div className="absolute top-[1358px] left-[958px] text-[84px] leading-[100px] tracking-[0.300px] whitespace-nowrap text-[#e8e8e8] [-webkit-text-stroke:0.8px_#e8e8e8] [text-shadow:0_2px_3px_rgba(0,0,0,0.9),0_0_3px_rgba(0,0,0,0.8)]">点一下空白处就行</div>
    </>
  );
}

export default function App() {
  return (
    <div className={`relative h-[1600px] w-[2560px] overflow-hidden bg-black ${ui}`}>
      <div className="h-[80px]" />
      <TitleBar />
      <main className="flex h-[1329px] flex-col bg-[#171717]">
        <WorkspaceBar />
        <div className="mt-[5px] flex shrink-0 gap-[4px]">
          <SourcePanel />
          <ProgramPanel />
        </div>
        <div className="mt-[5px] flex shrink-0">
          <ProjectPanel />
          <div className="w-[4px]" />
          <ToolPanel />
          <div className="w-[5px]" />
          <TimelinePanel />
          <div className="w-[5px]" />
          <AudioMeter />
        </div>
        <div className="mt-[2px] flex h-[26px] shrink-0 items-center bg-[#262626] text-[#8c8c8c]">
          <Svg w={22} h={20} className="-mt-[4px] ml-[3px]"><g strokeWidth="1.500">{ccPath}</g></Svg>
          <div className="ml-[2501px] h-[26px] w-px bg-[#3a3a3a]" />
        </div>
      </main>
      <Taskbar />
      <Overlays />
    </div>
  );
}
